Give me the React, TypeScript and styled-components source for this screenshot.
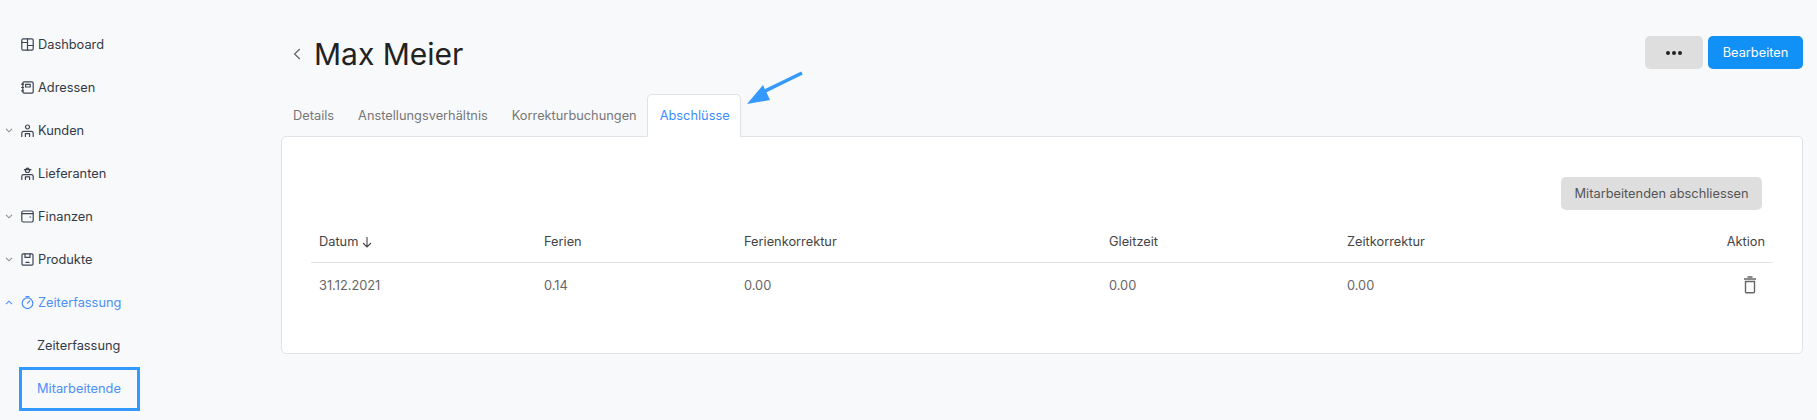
import React, { FC } from 'react'
import styled, { createGlobalStyle } from 'styled-components'

const GlobalStyle = createGlobalStyle`
  html, body { margin: 0; padding: 0; background: #f8f9fb; }
  body { font-family: Inter, "Liberation Sans", sans-serif; font-size: 12.8px; color: #333; }
`

const Page = styled.div`
  display: flex;
  min-height: 420px;
  width: 1817px;
`

const Sidebar = styled.nav`
  width: 281px;
  flex: none;
  padding-top: 23px;
  box-sizing: border-box;
`

const NavItem = styled.div<{ $active?: boolean }>`
  display: flex;
  align-items: center;
  height: 43px;
  box-sizing: border-box;
  color: ${p => (p.$active ? '#4a90f7' : '#333a45')};
`

const ChevronSlot = styled.span`
  width: 21px;
  flex: none;
  display: flex;
  justify-content: flex-end;
  padding-right: 8px;
  box-sizing: border-box;
`

const IconSlot = styled.span`
  width: 17px;
  flex: none;
  display: flex;
`

const SubItem = styled.div<{ $active?: boolean; $marked?: boolean }>`
  display: flex;
  align-items: center;
  height: ${p => (p.$marked ? '44px' : '43px')};
  width: ${p => (p.$marked ? '121px' : 'auto')};
  margin-left: 19px;
  padding-left: ${p => (p.$marked ? '15px' : '18px')};
  padding-bottom: ${p => (p.$marked ? '2px' : '0')};
  box-sizing: border-box;
  color: ${p => (p.$active ? '#4a90f7' : '#333a45')};
  border: ${p => (p.$marked ? '3px solid #3399ff' : 'none')};
`

const Main = styled.main`
  flex: 1;
  padding-right: 14px;
  min-width: 0;
`

const Header = styled.header`
  display: flex;
  align-items: center;
  justify-content: space-between;
  height: 94px;
  padding-top: 11px;
  box-sizing: border-box;
`

const TitleWrap = styled.div`
  display: flex;
  align-items: center;
  padding-left: 12px;
  padding-top: 2px;
  gap: 13px;
`

const Title = styled.h1`
  margin: 0;
  font-size: 30px;
  font-weight: 400;
  color: #222;
  line-height: 36px;
`

const HeaderActions = styled.div`
  display: flex;
  gap: 5px;
`

const Button = styled.button<{ $primary?: boolean; $wide?: number }>`
  height: 33px;
  width: ${p => p.$wide}px;
  border: 0;
  border-radius: 5px;
  padding: 0;
  font: inherit;
  display: flex;
  align-items: center;
  justify-content: center;
  background: ${p => (p.$primary ? '#1190f5' : '#dedede')};
  color: ${p => (p.$primary ? '#fff' : '#555')};
`

const Dots = styled.span`
  display: flex;
  gap: 2px;
`

const Dot = styled.i`
  width: 4px;
  height: 4px;
  border-radius: 50%;
  background: #222;
`

const TabRow = styled.div`
  position: relative;
  display: flex;
  height: 43px;
  margin-bottom: -1px;
  z-index: 1;
`

const Tab = styled.div<{ $active?: boolean }>`
  display: flex;
  align-items: center;
  padding: ${p => (p.$active ? '0 10px 0 12px' : '0 11px')};
  margin-left: ${p => (p.$active ? '-2px' : '0')};
  box-sizing: border-box;
  height: 43px;
  color: ${p => (p.$active ? '#3b8cff' : '#777')};
  background: ${p => (p.$active ? '#fff' : 'transparent')};
  border: 1px solid ${p => (p.$active ? '#dfe2e6' : 'transparent')};
  border-bottom-color: ${p => (p.$active ? '#fff' : 'transparent')};
  border-radius: 5px 5px 0 0;
`

const Arrow = styled.svg`
  position: absolute;
  left: 462px;
  top: -24px;
`

const Card = styled.section`
  height: 218px;
  background: #fff;
  border: 1px solid #dfe2e6;
  border-radius: 5px;
  box-sizing: border-box;
  padding: 40px 29px 0;
`

const CardActions = styled.div`
  display: flex;
  justify-content: flex-end;
  padding-right: 11px;
  margin-bottom: 9px;
`

const Table = styled.table`
  width: 100%;
  table-layout: fixed;
  border-collapse: collapse;
`

const Col = styled.col<{ $w: number }>`
  width: ${p => p.$w}px;
`

const Th = styled.th<{ $right?: boolean }>`
  height: 41px;
  padding: 2px 8px 0;
  font-weight: 400;
  color: #444;
  text-align: ${p => (p.$right ? 'right' : 'left')};
  border-bottom: 1px solid #e2e3e5;
`

const Td = styled.td<{ $right?: boolean }>`
  height: 44px;
  padding: 0 8px;
  color: #666;
  text-align: ${p => (p.$right ? 'right' : 'left')};
`

const SortLabel = styled.span`
  display: inline-flex;
  align-items: center;
  gap: 3px;
`

const TrashBtn = styled.span`
  display: inline-flex;
  margin-right: 8px;
  vertical-align: middle;
`

type IconProps = { color?: string }

const Svg: FC<{ size?: number; children: React.ReactNode; color?: string; sw?: number }> = ({ size = 13, children, color = '#3d4552', sw = 1.2 }) => (
  <svg width={size} height={size} viewBox="0 0 13 13" fill="none" stroke={color} strokeWidth={sw} strokeLinecap="round" strokeLinejoin="round">
    {children}
  </svg>
)

const Chevron: FC<{ up?: boolean; color?: string }> = ({ up, color = '#8a8f98' }) => (
  <svg width="8" height="5" viewBox="0 0 8 5" fill="none" stroke={color} strokeWidth="1.1">
    <path d={up ? 'M1 4.2 4 1.2 7 4.2' : 'M1 .8 4 3.8 7 .8'} />
  </svg>
)

const DashIcon: FC<IconProps> = () => (
  <Svg>
    <rect x=".8" y=".8" width="11.4" height="11.4" rx="1.4" />
    <path d="M6.5 .8v11.4M6.5 7.5h5.7M.8 4.5h5.7" />
  </Svg>
)
const BookIcon: FC<IconProps> = () => (
  <Svg>
    <rect x="1.8" y=".8" width="10.4" height="11.4" rx="1.4" />
    <rect x="4.6" y="3.4" width="4.6" height="2.6" />
    <path d="M.6 3.2h2M.6 6.5h2M.6 9.8h2" />
  </Svg>
)
const PeopleIcon: FC<IconProps> = () => (
  <Svg>
    <circle cx="6.5" cy="3" r="2" />
    <path d="M.8 12.4V9.2a1.8 1.8 0 0 1 1.8-1.8h7.8a1.8 1.8 0 0 1 1.8 1.8v3.2M4.4 12.4V9.6h4.2v2.8" />
  </Svg>
)
const CourierIcon: FC<IconProps> = () => (
  <Svg>
    <path d="M3.4 2.6h6.6M4.6 2.6a2 2 0 0 1 3.8 0M4.4 3.4a2.1 2.1 0 0 0 4.2 0" />
    <path d="M.8 12.4V9.4a1.8 1.8 0 0 1 1.8-1.8h7.8a1.8 1.8 0 0 1 1.8 1.8v3M4.4 12.4V9.8h4.2v2.6" />
  </Svg>
)
const WalletIcon: FC<IconProps> = () => (
  <Svg>
    <rect x=".8" y="1" width="11.4" height="11" rx="1.4" />
    <path d="M.8 3.6h11.4M9 7h.6" />
  </Svg>
)
const BoxIcon: FC<IconProps> = () => (
  <Svg>
    <rect x="1" y=".8" width="11" height="11.4" rx="1.2" />
    <path d="M4 .8v3.6h5V.8M5 9.4h3" />
  </Svg>
)
const WatchIcon: FC<IconProps> = ({ color }) => (
  <Svg color={color}>
    <circle cx="6.5" cy="7.2" r="5.3" />
    <path d="M5 .7h3M6.5 7.2 8.6 5" />
  </Svg>
)

const navItems = [
  { label: 'Dashboard', icon: <DashIcon /> },
  { label: 'Adressen', icon: <BookIcon /> },
  { label: 'Kunden', icon: <PeopleIcon />, chevron: true },
  { label: 'Lieferanten', icon: <CourierIcon /> },
  { label: 'Finanzen', icon: <WalletIcon />, chevron: true },
  { label: 'Produkte', icon: <BoxIcon />, chevron: true },
]

const columns = [225, 200, 365, 238, 300, 134]

const App: FC = () => (
  <>
    <GlobalStyle />
    <Page>
      <Sidebar>
        {navItems.map(item => (
          <NavItem key={item.label}>
            <ChevronSlot>{item.chevron && <Chevron />}</ChevronSlot>
            <IconSlot>{item.icon}</IconSlot>
            {item.label}
          </NavItem>
        ))}
        <NavItem $active>
          <ChevronSlot><Chevron up color="#4a90f7" /></ChevronSlot>
          <IconSlot><WatchIcon color="#4a90f7" /></IconSlot>
          Zeiterfassung
        </NavItem>
        <SubItem>Zeiterfassung</SubItem>
        <SubItem $active $marked>Mitarbeitende</SubItem>
      </Sidebar>
      <Main>
        <Header>
          <TitleWrap>
            <svg width="8" height="12" viewBox="0 0 8 12" fill="none" stroke="#666" strokeWidth="1.3">
              <path d="M6.8 1 1.6 6l5.2 5" />
            </svg>
            <Title>Max Meier</Title>
          </TitleWrap>
          <HeaderActions>
            <Button $wide={58}>
              <Dots><Dot /><Dot /><Dot /></Dots>
            </Button>
            <Button $wide={95} $primary>Bearbeiten</Button>
          </HeaderActions>
        </Header>
        <TabRow>
          <Tab>Details</Tab>
          <Tab>Anstellungsverhältnis</Tab>
          <Tab>Korrekturbuchungen</Tab>
          <Tab $active>Abschlüsse</Tab>
          <Arrow width="62" height="36" viewBox="0 0 62 36">
            <path d="M59 3 18 23" stroke="#3399ff" strokeWidth="3.4" strokeLinecap="butt" />
            <path d="M4 34 20 15 27 30Z" fill="#3399ff" />
          </Arrow>
        </TabRow>
        <Card>
          <CardActions>
            <Button $wide={201}>Mitarbeitenden abschliessen</Button>
          </CardActions>
          <Table>
            <colgroup>
              {columns.map((w, i) => <Col key={i} $w={w} />)}
            </colgroup>
            <thead>
              <tr>
                <Th>
                  <SortLabel>
                    Datum
                    <svg width="12" height="12" viewBox="0 0 12 12" fill="none" stroke="#444" strokeWidth="1.1">
                      <path d="M6 1v10M2 7l4 4 4-4" />
                    </svg>
                  </SortLabel>
                </Th>
                <Th>Ferien</Th>
                <Th>Ferienkorrektur</Th>
                <Th>Gleitzeit</Th>
                <Th>Zeitkorrektur</Th>
                <Th $right>Aktion</Th>
              </tr>
            </thead>
            <tbody>
              <tr>
                <Td>31.12.2021</Td>
                <Td>0.14</Td>
                <Td>0.00</Td>
                <Td>0.00</Td>
                <Td>0.00</Td>
                <Td $right>
                  <TrashBtn>
                    <svg width="14" height="18" viewBox="0 0 14 18" fill="none" stroke="#666" strokeWidth="1.4">
                      <path d="M1 3h12M4.5 1h5M2.5 5.5v10.2a1 1 0 0 0 1 1h7a1 1 0 0 0 1-1V5.5z" />
                    </svg>
                  </TrashBtn>
                </Td>
              </tr>
            </tbody>
          </Table>
        </Card>
      </Main>
    </Page>
  </>
)

export default App
